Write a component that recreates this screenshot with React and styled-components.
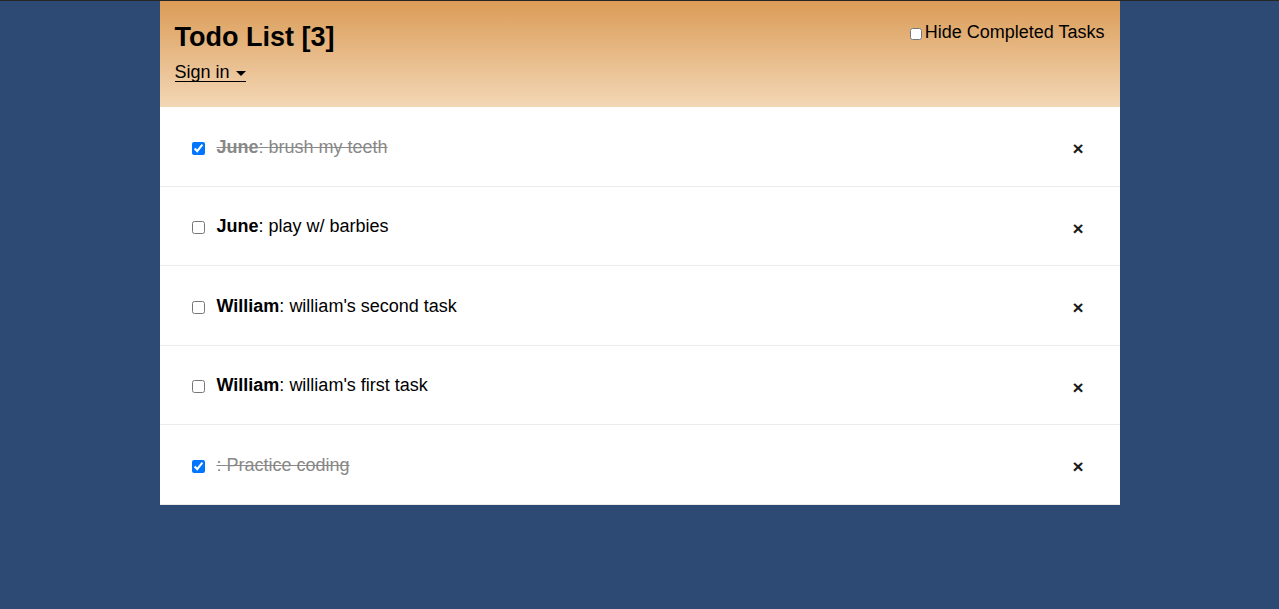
import React, { useState } from "react";
import styled, { createGlobalStyle } from "styled-components";

const GlobalStyle = createGlobalStyle`
  html, body {
    margin: 0;
    padding: 0;
    height: 100%;
  }
  body {
    background: #2c4a74;
    border-top: 1px solid #262626;
    box-sizing: border-box;
    font-family: "Liberation Sans", Arial, Helvetica, sans-serif;
    color: #000;
  }
`;

const Container = styled.div`
  width: 960px;
  margin: 0 auto;
  background: #fff;
`;

const Header = styled.header`
  display: flex;
  justify-content: space-between;
  align-items: flex-start;
  padding: 21px 15px 25px;
  height: 106px;
  box-sizing: border-box;
  background: linear-gradient(to bottom, #db9c57, #f3d7b6);
`;

const TitleBlock = styled.div`
  display: flex;
  flex-direction: column;
  align-items: flex-start;
`;

const Title = styled.h1`
  margin: 0;
  font-size: 27px;
  line-height: 31px;
  font-weight: bold;
`;

const SignIn = styled.a`
  margin-top: 10px;
  font-size: 18px;
  line-height: 18px;
  color: #000;
  text-decoration: none;
  border-bottom: 1px solid #000;
  cursor: pointer;
  display: inline-flex;
  align-items: center;
  gap: 6px;
`;

const Caret = styled.span`
  display: inline-block;
  width: 0;
  height: 0;
  border-left: 5px solid transparent;
  border-right: 5px solid transparent;
  border-top: 5px solid #000;
  margin-top: 2px;
`;

const HideLabel = styled.label`
  display: flex;
  align-items: center;
  font-size: 18px;
  cursor: pointer;

  input {
    margin: 2px 3px 0 0;
    width: 12px;
    height: 12px;
  }
`;

const List = styled.ul`
  list-style: none;
  margin: 0;
  padding: 0;
`;

const Item = styled.li`
  box-sizing: border-box;
  height: 79.5px;
  display: flex;
  align-items: center;
  padding: 1px 36px 0 32px;
  border-bottom: 1px solid #ebebeb;
  font-size: 18px;
`;

const Check = styled.input`
  margin: 3px 12px 0 0;
  width: 13px;
  height: 13px;
`;

const Text = styled.span`
  flex: 1;
  padding-top: 1px;
  color: ${(p) => (p.$checked ? "#888" : "#000")};
  text-decoration: ${(p) => (p.$checked ? "line-through" : "none")};
`;

const Delete = styled.button`
  border: none;
  background: none;
  padding: 0;
  font-family: inherit;
  font-size: 19px;
  font-weight: bold;
  color: #1a1a1a;
  cursor: pointer;
  margin-top: 5px;
`;

const initialTasks = [
  { id: 1, user: "June", text: "brush my teeth", checked: true },
  { id: 2, user: "June", text: "play w/ barbies", checked: false },
  { id: 3, user: "William", text: "william's second task", checked: false },
  { id: 4, user: "William", text: "william's first task", checked: false },
  { id: 5, user: "", text: "Practice coding", checked: true },
];

export default function App() {
  const [tasks, setTasks] = useState(initialTasks);
  const [hide, setHide] = useState(false);
  const open = tasks.filter((t) => !t.checked).length;
  const shown = hide ? tasks.filter((t) => !t.checked) : tasks;

  const toggle = (id) =>
    setTasks(tasks.map((t) => (t.id === id ? { ...t, checked: !t.checked } : t)));
  const remove = (id) => setTasks(tasks.filter((t) => t.id !== id));

  return (
    <>
      <GlobalStyle />
      <Container>
        <Header>
          <TitleBlock>
            <Title>Todo List [{open}]</Title>
            <SignIn>
              Sign in <Caret />
            </SignIn>
          </TitleBlock>
          <HideLabel>
            <input type="checkbox" checked={hide} onChange={() => setHide(!hide)} />
            Hide Completed Tasks
          </HideLabel>
        </Header>
        <List>
          {shown.map((t) => (
            <Item key={t.id}>
              <Check type="checkbox" checked={t.checked} onChange={() => toggle(t.id)} />
              <Text $checked={t.checked}>
                <strong>{t.user}</strong>: {t.text}
              </Text>
              <Delete onClick={() => remove(t.id)}>×</Delete>
            </Item>
          ))}
        </List>
      </Container>
    </>
  );
}
